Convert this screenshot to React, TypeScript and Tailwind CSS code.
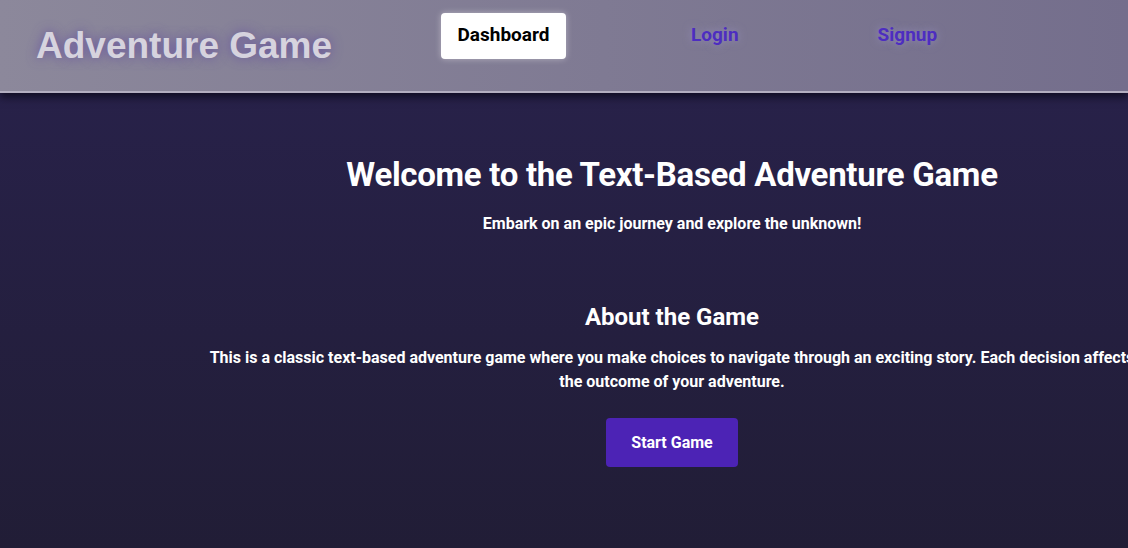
import React from "react";

const rob = { fontFamily: 'Roboto, "Liberation Sans", sans-serif' };

export default function App() {
  return (
    <div className="w-[1128px] h-[548px] overflow-hidden bg-gradient-to-b from-[#29224d] to-[#211d36]" style={rob}>
      <header className="relative h-[93px] bg-gradient-to-r from-[#8c889b] to-[#746e8c] border-b-2 border-[#b3aec0] shadow-[0_4px_8px_rgba(10,8,25,0.8)] flex items-center">
        <h1 className="ml-[36px] text-[37px] font-bold text-[#d6d3de] [text-shadow:0_0_12px_rgba(95,70,160,0.8)] w-[405px]" style={{ fontFamily: '"Liberation Sans", Arial, sans-serif' }}>
          Adventure Game
        </h1>
        <nav className="flex items-center -mt-[20px]">
          <a className="h-[46px] w-[125px] bg-white rounded-[4px] flex items-center justify-center text-[19px] font-bold text-black shadow-[0_0_6px_rgba(255,255,255,0.4)]">
            Dashboard
          </a>
          <a className="ml-[125px] text-[19px] font-bold text-[#4d2dc0] [text-shadow:0_0_8px_rgba(170,160,220,0.6)]">Login</a>
          <a className="ml-[139px] text-[19px] font-bold text-[#4d2dc0] [text-shadow:0_0_8px_rgba(170,160,220,0.6)]">Signup</a>
        </nav>
      </header>
      <main className="ml-[214px] w-[916px] flex flex-col items-center text-center text-white">
        <h2 className="mt-[62px] text-[33px] font-bold leading-[40px] tracking-[-0.3px]">Welcome to the Text-Based Adventure Game</h2>
        <p className="mt-[17px] text-[16px] font-bold leading-[24px]">Embark on an epic journey and explore the unknown!</p>
        <h3 className="mt-[65px] text-[24px] font-bold leading-[32px]">About the Game</h3>
        <p className="mt-[13px] text-[16px] font-bold leading-[24px] whitespace-nowrap">
          This is a classic text-based adventure game where you make choices to navigate through an exciting story. Each decision affects
        </p>
        <p className="text-[16px] font-bold leading-[24px]">the outcome of your adventure.</p>
        <button className="mt-[24px] w-[132px] h-[49px] rounded-[4px] bg-[#4c23b5] text-white text-[16px] font-bold">
          Start Game
        </button>
      </main>
    </div>
  );
}
